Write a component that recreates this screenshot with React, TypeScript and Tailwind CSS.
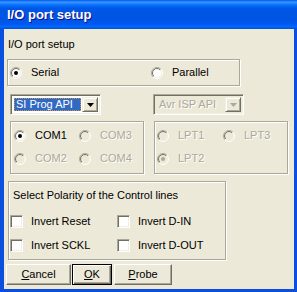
import React from "react";

function Radio({ checked, disabled, label, w }: { checked?: boolean; disabled?: boolean; label: string; w?: string }) {
  return (
    <div className={`flex items-center h-[13px] ${w ?? ""}`}>
      <svg width="12" height="12" viewBox="0 0 12 12" className="shrink-0">
        <defs>
          <linearGradient id="ro" x1="0" y1="0" x2="1" y2="1">
            <stop offset="0.5" stopColor="#ACA899" />
            <stop offset="0.5" stopColor="#FFFFFF" />
          </linearGradient>
          <linearGradient id="ri" x1="0" y1="0" x2="1" y2="1">
            <stop offset="0.5" stopColor="#716F64" />
            <stop offset="0.5" stopColor="#F1EFE2" />
          </linearGradient>
        </defs>
        <circle cx="6" cy="6" r="5.5" fill="none" stroke="url(#ro)" strokeWidth="1" />
        <circle cx="6" cy="6" r="4.5" fill={disabled ? "#ECE9D8" : "#FFFFFF"} stroke="url(#ri)" strokeWidth="1" />
        {checked && <circle cx="6" cy="6" r="2" fill={disabled ? "#ACA899" : "#000000"} />}
      </svg>
      <span
        className={`ml-[9px] leading-[13px] whitespace-nowrap ${
          disabled ? "text-[#ACA899] [text-shadow:1px_1px_0_#ffffff]" : "text-black"
        }`}
      >
        {label}
      </span>
    </div>
  );
}

function Check({ label, w }: { label: string; w?: string }) {
  return (
    <div className={`flex items-center h-[13px] ${w ?? ""}`}>
      <div className="w-[13px] h-[13px] shrink-0 bg-white border border-t-[#ACA899] border-l-[#ACA899] border-b-white border-r-white shadow-[inset_1px_1px_0_#716F64,inset_-1px_-1px_0_#F1EFE2]" />
      <span className="ml-[8px] leading-[13px] whitespace-nowrap">{label}</span>
    </div>
  );
}

function Arrow({ color }: { color: string }) {
  return (
    <svg width="7" height="4" viewBox="0 0 7 4">
      <polygon points="0,0 7,0 3.5,4" fill={color} />
    </svg>
  );
}

function Combo({ label, disabled }: { label: string; disabled?: boolean }) {
  return (
    <div className="w-[91px] h-[21px] flex p-[2px] bg-white border border-t-[#ACA899] border-l-[#ACA899] border-b-white border-r-white shadow-[inset_1px_1px_0_#716F64,inset_-1px_-1px_0_#F1EFE2] data-[d=true]:bg-[#ECE9D8]" data-d={disabled ? "true" : "false"}>
      <div className="flex-1 flex items-center p-[1px]">
        {disabled ? (
          <div className="flex-1 h-full flex items-center pl-[2px] text-[#ACA899] [text-shadow:1px_1px_0_#ffffff] leading-[13px]">
            {label}
          </div>
        ) : (
          <div className="flex-1 h-full flex items-center pl-[2px] bg-[#316AC5] text-white leading-[13px] outline outline-1 outline-dotted outline-[#CE953A] -outline-offset-1">
            {label}
          </div>
        )}
      </div>
      <div className="w-[16px] h-full flex items-center justify-center bg-[#ECE9D8] border border-t-[#F1EFE2] border-l-[#F1EFE2] border-b-[#716F64] border-r-[#716F64] shadow-[inset_1px_1px_0_#fff,inset_-1px_-1px_0_#ACA899]">
        <Arrow color={disabled ? "#ACA899" : "#000000"} />
      </div>
    </div>
  );
}

const etched = "border border-[#ACA899] shadow-[inset_1px_1px_0_#ffffff,1px_1px_0_#ffffff]";

function Btn({ children, w, def }: { children: React.ReactNode; w: string; def?: boolean }) {
  return (
    <div
      className={`${w} h-[21px] flex items-center justify-center leading-[13px] bg-[#ECE9D8] ${
        def
          ? "border border-black shadow-[inset_1px_1px_0_#ffffff,inset_-1px_-1px_0_#716F64,inset_-2px_-2px_0_#ACA899]"
          : "border border-t-white border-l-white border-b-[#716F64] border-r-[#716F64] shadow-[inset_-1px_-1px_0_#ACA899]"
      }`}
    >
      {children}
    </div>
  );
}

export default function App() {
  return (
    <div className="w-[297px] h-[292px] flex flex-col bg-[#0A4FDD] font-['Liberation_Sans',sans-serif] text-[11px] text-black overflow-hidden">
      <div className="h-[29px] shrink-0 flex items-center pl-[7px] bg-[linear-gradient(to_bottom,#0058EE_0%,#3A93FF_7%,#288EFF_10%,#127DFF_14%,#0369FC_20%,#0262EE_24%,#0057E5_28%,#0054E3_60%,#0055EB_76%,#005BF5_86%,#026AFE_92%,#0062EF_94%,#0052D6_100%)]">
        <span className="text-white font-bold text-[13px] leading-[16px] [text-shadow:1px_1px_0_#0F1089]">I/O port setup</span>
      </div>
      <div className="flex-1 ml-[4px] mr-[3px] mb-[3px] bg-[#ECE9D8] flex flex-col">
        <div className="pl-[4px] pt-[9px] leading-[13px]">I/O port setup</div>

        <div className={`mt-[8px] ml-[3px] w-[233px] h-[27px] ${etched} flex items-center pl-[2px]`}>
          <Radio checked label="Serial" w="w-[141px]" />
          <Radio label="Parallel" />
        </div>

        <div className="mt-[8px] flex">
          <div className="ml-[6px]">
            <Combo label="SI Prog API" />
          </div>
          <div className="ml-[52px]">
            <Combo label="Avr ISP API" disabled />
          </div>
        </div>

        <div className="mt-[6px] flex">
          <div className={`ml-[6px] w-[134px] h-[53px] ${etched} flex flex-col pt-[7px] pl-[3px] gap-[10px]`}>
            <div className="flex">
              <Radio checked label="COM1" w="w-[65px]" />
              <Radio disabled label="COM3" />
            </div>
            <div className="flex">
              <Radio disabled label="COM2" w="w-[65px]" />
              <Radio disabled label="COM4" />
            </div>
          </div>
          <div className={`ml-[10px] w-[134px] h-[53px] ${etched} flex flex-col pt-[7px] pl-[2px] gap-[10px]`}>
            <div className="flex">
              <Radio disabled label="LPT1" w="w-[66px]" />
              <Radio disabled label="LPT3" />
            </div>
            <div className="flex">
              <Radio disabled checked label="LPT2" w="w-[66px]" />
            </div>
          </div>
        </div>

        <div className={`mt-[7px] ml-[4px] w-[218px] h-[79px] ${etched} flex flex-col pt-[7px] pl-[1px]`}>
          <div className="ml-[3px] leading-[13px] whitespace-nowrap">Select Polarity of the Control lines</div>
          <div className="mt-[13px] flex">
            <Check label="Invert Reset" w="w-[107px]" />
            <Check label="Invert D-IN" />
          </div>
          <div className="mt-[11px] flex">
            <Check label="Invert SCKL" w="w-[107px]" />
            <Check label="Invert D-OUT" />
          </div>
        </div>

        <div className="mt-[4px] flex">
          <div className="ml-[2px]">
            <Btn w="w-[65px]">
              <span><span className="underline">C</span>ancel</span>
            </Btn>
          </div>
          <div className="ml-[1px]">
            <Btn w="w-[40px]" def>
              <span><span className="underline">O</span>K</span>
            </Btn>
          </div>
          <div className="ml-[2px]">
            <Btn w="w-[58px]">
              <span><span className="underline">P</span>robe</span>
            </Btn>
          </div>
        </div>
      </div>
    </div>
  );
}
